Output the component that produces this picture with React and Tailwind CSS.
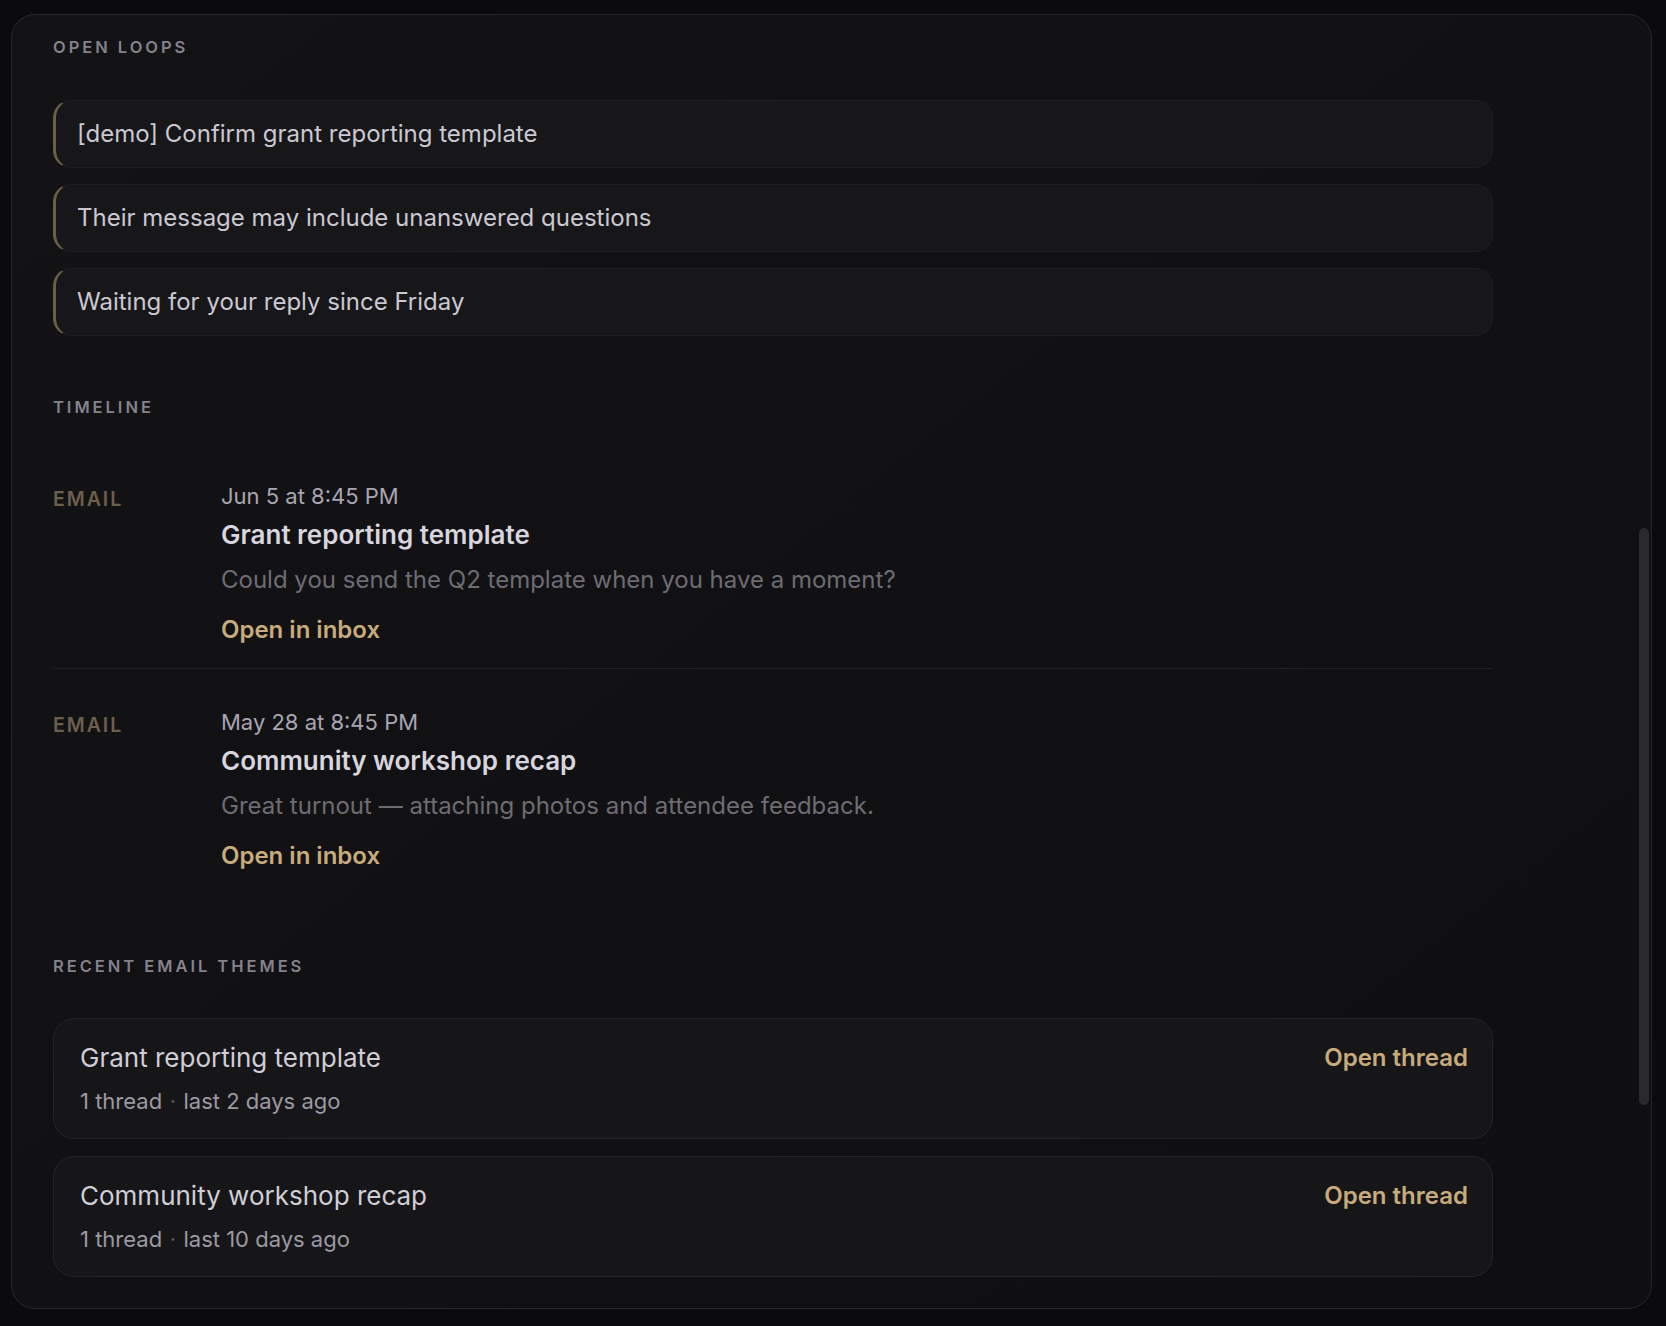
const loops = [
  "[demo] Confirm grant reporting template",
  "Their message may include unanswered questions",
  "Waiting for your reply since Friday",
];

const timeline = [
  {
    kind: "Email",
    when: "Jun 5 at 8:45 PM",
    subject: "Grant reporting template",
    snippet: "Could you send the Q2 template when you have a moment?",
  },
  {
    kind: "Email",
    when: "May 28 at 8:45 PM",
    subject: "Community workshop recap",
    snippet: "Great turnout \u2014 attaching photos and attendee feedback.",
  },
];

const themes = [
  { title: "Grant reporting template", count: "1 thread", last: "last 2 days ago" },
  { title: "Community workshop recap", count: "1 thread", last: "last 10 days ago" },
];

function SectionLabel({ children, className = "" }) {
  return (
    <h3
      className={`text-[16.5px] leading-[24px] font-semibold uppercase tracking-[0.18em] text-[#85828e] ${className}`}
    >
      {children}
    </h3>
  );
}

function LoopCard({ text }) {
  return (
    <div className="rounded-[18px] border border-[#1e1e22] border-l-[3px] border-l-[#6c5f48] bg-[#17171a] pl-[21px] pt-[15px] pb-[15px] text-[24px] leading-[36px] text-[#cbc8d1]">
      {text}
    </div>
  );
}

function TimelineRow({ item, last }) {
  return (
    <div
      className={`grid grid-cols-[168px_1fr] pt-[38px] pb-[20px] ${
        last ? "" : "border-b border-[#222226]"
      }`}
    >
      <div className="mt-[3px] text-[19.5px] leading-[30px] font-semibold uppercase tracking-[0.1em] text-[#6b604c]">
        {item.kind}
      </div>
      <div className="flex flex-col items-start">
        <div className="text-[22px] leading-[30px] text-[#a9a5b1]">{item.when}</div>
        <div className="mt-[6px] text-[26px] leading-[36px] font-semibold text-[#d8d5de]">
          {item.subject}
        </div>
        <div className="mt-[9px] text-[24px] leading-[36px] text-[#6e6c72]">{item.snippet}</div>
        <a className="mt-[14px] text-[24px] leading-[36px] font-semibold text-[#c8ab7c] cursor-pointer">
          Open in inbox
        </a>
      </div>
    </div>
  );
}

function ThemeCard({ theme }) {
  return (
    <div className="flex h-[121px] items-start justify-between rounded-[21px] border border-[#242428] bg-[#161619] pl-[26px] pr-[24px] pt-[21px]">
      <div>
        <div className="text-[26px] leading-[36px] text-[#d0cdd6]">{theme.title}</div>
        <div className="mt-[10px] text-[22px] leading-[31.5px] text-[#9c99a3]">
          {theme.count}
          <span className="px-[7.5px] text-[#55535a]">·</span>
          {theme.last}
        </div>
      </div>
      <a className="text-[24px] leading-[36px] font-semibold text-[#c8ab7c] cursor-pointer">
        Open thread
      </a>
    </div>
  );
}

export default function App() {
  return (
    <div className="min-h-screen bg-[#0b0b0e] pl-[11px] pt-[14px] font-['Inter','Noto_Sans',sans-serif] antialiased">
      <div className="relative h-[1295px] w-[1641px] overflow-hidden rounded-[24px] border border-[#27272b] bg-linear-to-br from-[#131316] to-[#0f0f12]">
        <div className="pl-[41px] pt-[20px]">
          <div className="w-[1440px]">
            <section>
              <SectionLabel>Open loops</SectionLabel>
              <div className="mt-[41px] flex flex-col gap-[16px]">
                {loops.map((t) => (
                  <LoopCard key={t} text={t} />
                ))}
              </div>
            </section>

            <section className="mt-[59px]">
              <SectionLabel>Timeline</SectionLabel>
              <div className="mt-[24px]">
                {timeline.map((item, i) => (
                  <TimelineRow key={item.when} item={item} last={i === timeline.length - 1} />
                ))}
              </div>
            </section>

            <section className="mt-[60px]">
              <SectionLabel>Recent email themes</SectionLabel>
              <div className="mt-[40px] flex flex-col gap-[17px]">
                {themes.map((t) => (
                  <ThemeCard key={t.title} theme={t} />
                ))}
              </div>
            </section>
          </div>
        </div>

        {/* scroll thumb */}
        <div className="absolute right-[2px] top-[513px] h-[577px] w-[10px] rounded-full bg-[#2a2a2e]" />
      </div>
    </div>
  );
}
